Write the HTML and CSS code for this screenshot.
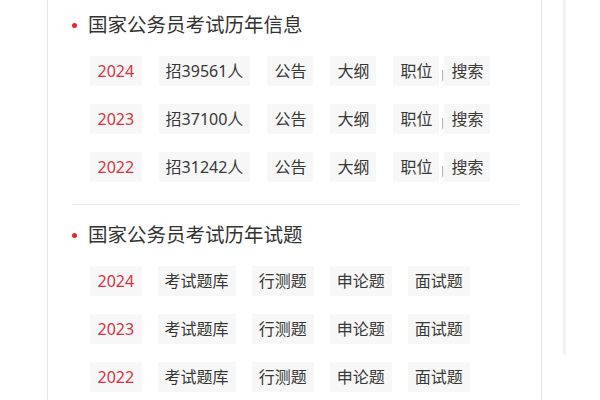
FILE: index.html
```html
<!DOCTYPE html>
<html lang="zh-CN">
<head>
<meta charset="utf-8">
<title>国家公务员考试</title>
<link rel="stylesheet" href="styles.css">
</head>
<body>
<div class="page">
  <div class="panel">
    <section class="block">
      <h2 class="title"><span class="dot"></span>国家公务员考试历年信息</h2>
      <div class="rows">
        <div class="row row1">
          <a class="tag year">2024</a>
          <a class="tag">招39561人</a>
          <a class="tag">公告</a>
          <a class="tag">大纲</a>
          <span class="pair"><a class="tag">职位</a><span class="sep">|</span><a class="tag">搜索</a></span>
        </div>
        <div class="row row1">
          <a class="tag year">2023</a>
          <a class="tag">招37100人</a>
          <a class="tag">公告</a>
          <a class="tag">大纲</a>
          <span class="pair"><a class="tag">职位</a><span class="sep">|</span><a class="tag">搜索</a></span>
        </div>
        <div class="row row1">
          <a class="tag year">2022</a>
          <a class="tag">招31242人</a>
          <a class="tag">公告</a>
          <a class="tag">大纲</a>
          <span class="pair"><a class="tag">职位</a><span class="sep">|</span><a class="tag">搜索</a></span>
        </div>
      </div>
    </section>
    <hr class="divider">
    <section class="block">
      <h2 class="title"><span class="dot"></span>国家公务员考试历年试题</h2>
      <div class="rows">
        <div class="row">
          <a class="tag year">2024</a>
          <a class="tag">考试题库</a>
          <a class="tag">行测题</a>
          <a class="tag">申论题</a>
          <a class="tag">面试题</a>
        </div>
        <div class="row">
          <a class="tag year">2023</a>
          <a class="tag">考试题库</a>
          <a class="tag">行测题</a>
          <a class="tag">申论题</a>
          <a class="tag">面试题</a>
        </div>
        <div class="row">
          <a class="tag year">2022</a>
          <a class="tag">考试题库</a>
          <a class="tag">行测题</a>
          <a class="tag">申论题</a>
          <a class="tag">面试题</a>
        </div>
      </div>
    </section>
  </div>
  <div class="side"><div class="shade"></div></div>
</div>
</body>
</html>
```

FILE: styles.css
```css
* { box-sizing: border-box; }
html, body { margin: 0; padding: 0; background: #fff; }
body {
  font-family: "Noto Sans", "Noto Sans CJK SC", sans-serif;
  color: #333;
  width: 600px;
  height: 400px;
  overflow: hidden;
}
.page {
  display: flex;
  height: 400px;
  padding-left: 47px;
}
.panel {
  width: 495px;
  height: 400px;
  border-left: 1px solid #e6e6e6;
  border-right: 1px solid #e6e6e6;
  padding: 10px 22px 0 24px;
}
.title {
  margin: 0;
  display: flex;
  align-items: center;
  font-size: 19.5px;
  font-weight: normal;
  line-height: 30px;
  height: 30px;
  color: #333;
}
.dot {
  width: 5px;
  height: 5px;
  border-radius: 50%;
  background: #e4262f;
  margin-right: 11px;
  flex: none;
}
.rows {
  display: flex;
  flex-direction: column;
  gap: 18px;
  padding-left: 18px;
  margin-top: 16px;
}
.row {
  display: flex;
  align-items: center;
  gap: 16px;
  height: 30px;
}
.row1 { gap: 17px; }
.tag {
  display: block;
  height: 30px;
  line-height: 30px;
  padding: 0 7px;
  background: #f7f7f7;
  font-size: 16px;
  color: #383838;
  white-space: nowrap;
}
.tag.year { color: #d8323c; padding: 0 7.5px; }
.pair {
  display: flex;
  align-items: center;
}
.sep {
  font-size: 11px;
  color: #999;
  width: 5px;
  text-align: center;
  line-height: 30px;
  padding-top: 6px;
}
.divider {
  border: 0;
  border-top: 1px solid #ebebeb;
  margin: 22px 0 15px 0;
  height: 0;
}
.side {
  padding-left: 20px;
}
.shade {
  width: 5px;
  height: 355px;
  background: linear-gradient(to right, #fff, #efefef 50%, #fff);
}
```
